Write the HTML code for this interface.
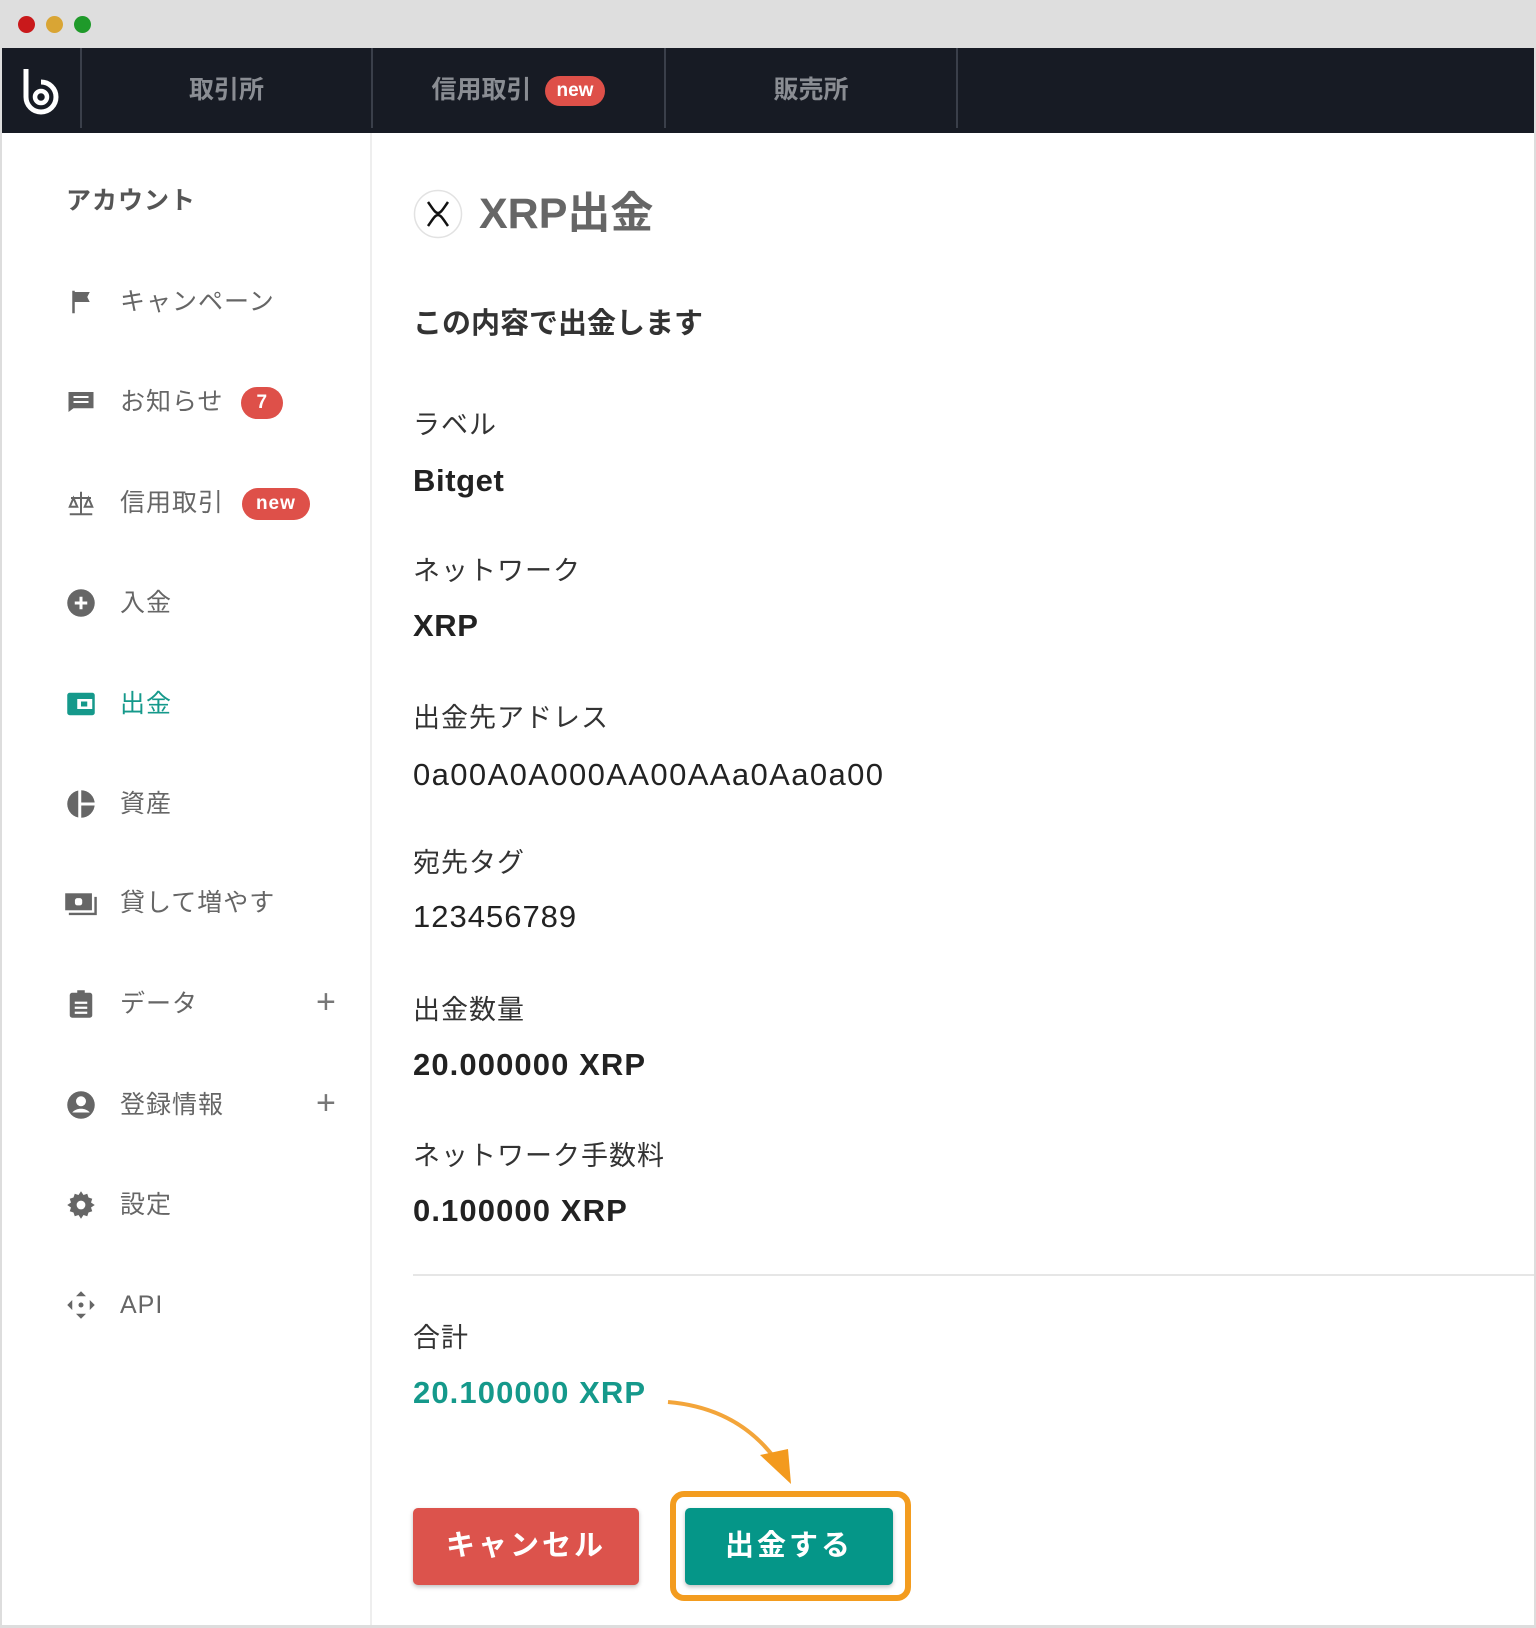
<!DOCTYPE html>
<html><head><meta charset="utf-8"><style>
*{margin:0;padding:0;box-sizing:border-box}
body{width:1536px;height:1628px;background:#fff;font-family:"Liberation Sans","Noto Sans CJK JP",sans-serif;position:relative;overflow:hidden}
.a{position:absolute;white-space:nowrap}
.chrome{left:0;top:0;width:1536px;height:48px;background:#dedede}
.dot{position:absolute;top:16px;width:17px;height:17px;border-radius:50%}
.nav{left:2px;top:48px;width:1534px;height:85px;background:#171b24}
.sep{position:absolute;top:48px;width:2px;height:80px;background:#3a3f4a}
.tab{position:absolute;top:48px;height:85px;line-height:85px;color:#8a8d93;font-size:25px;font-weight:bold;text-align:center}
.badge{display:inline-block;background:#de5049;color:#fff;border-radius:16px;font-size:19px;font-weight:bold;line-height:30px;padding:0 12px;vertical-align:middle}
.side{position:absolute;left:2px;top:133px;width:370px;height:1495px;border-right:2px solid #eee}
.si{position:absolute;left:120px;font-size:25px;color:#666;line-height:34px;margin-top:-17px;letter-spacing:1px}
.ic{position:absolute;left:66px;width:30px;height:30px;margin-top:-15px}
.plus{position:absolute;left:316px;font-size:34px;color:#777;line-height:34px;margin-top:-19px;font-weight:300}
.lbl{position:absolute;left:413px;font-size:27px;color:#333;line-height:36px;margin-top:-18px;letter-spacing:1px}
.val{position:absolute;left:413px;font-size:31px;color:#222;line-height:40px;margin-top:-20px;font-weight:bold;letter-spacing:0.6px}
</style></head><body>
<div class="a chrome"></div>
<div class="dot" style="left:18px;background:#c9191b"></div>
<div class="dot" style="left:46px;background:#d9a534"></div>
<div class="dot" style="left:74px;background:#1f9a2a"></div>
<div class="a nav"></div>
<svg class="a" style="left:20px;top:66px" width="44" height="50" viewBox="0 0 44 50"><path d="M6 3v28a15 15 0 1 0 15-15" fill="none" stroke="#fff" stroke-width="5"/><circle cx="21" cy="31" r="6" fill="none" stroke="#fff" stroke-width="4.5"/></svg>
<div class="sep" style="left:80px"></div><div class="sep" style="left:371px"></div><div class="sep" style="left:664px"></div><div class="sep" style="left:956px"></div>
<div class="tab" style="left:82px;width:289px">取引所</div>
<div class="tab" style="left:373px;width:291px">信用取引 <span class="badge" style="margin-left:6px">new</span></div>
<div class="tab" style="left:666px;width:290px">販売所</div>
<div class="a" style="right:0;top:48px;width:2px;height:1580px;background:#ddd"></div>
<div class="a" style="left:0;top:48px;width:2px;height:1580px;background:#ddd"></div>
<div class="side"></div>
<div class="a" style="left:66px;top:184px;font-size:25px;font-weight:bold;color:#555;line-height:34px;letter-spacing:1px">アカウント</div>

<svg class="ic" style="top:302px" viewBox="0 0 24 24"><path d="M5 3h2v18H5zM7 4h12l-2 4 2 4H7z" fill="#666"/></svg>
<div class="si" style="top:302px">キャンペーン</div>
<svg class="ic" style="top:402px" viewBox="0 0 24 24"><path d="M2 4h20v13H6l-4 3z" fill="#666"/><path d="M6 8h12M6 12h12" stroke="#fff" stroke-width="1.6"/></svg>
<div class="si" style="top:402px">お知らせ <span class="badge" style="padding:0 15px;margin-left:10px;line-height:32px">7</span></div>
<svg class="ic" style="top:503px" viewBox="0 0 24 24" fill="none" stroke="#666" stroke-width="1.6"><path d="M12 3v18M3 21h18M4 8h16M3 15l3-7 3 7zM15 15l3-7 3 7zM3 15h6M15 15h6"/></svg>
<div class="si" style="top:503px">信用取引 <span class="badge" style="margin-left:10px;line-height:32px;padding:0 14px">new</span></div>
<svg class="ic" style="top:603px" viewBox="0 0 24 24"><circle cx="12" cy="12" r="11" fill="#666"/><path d="M12 7v10M7 12h10" stroke="#fff" stroke-width="2.4"/></svg>
<div class="si" style="top:603px">入金</div>
<svg class="ic" style="top:704px" viewBox="0 0 24 24"><rect x="1" y="3" width="22" height="18" rx="2" fill="#15998b"/><rect x="9" y="8" width="12" height="8" fill="#fff"/><rect x="12" y="10" width="5" height="4" fill="#15998b"/></svg>
<div class="si" style="top:704px;color:#15998b">出金</div>
<svg class="ic" style="top:804px" viewBox="0 0 24 24"><circle cx="12" cy="12" r="11" fill="#666"/><path d="M11 0v24M11 12h13" stroke="#fff" stroke-width="2.4"/></svg>
<div class="si" style="top:804px">資産</div>
<svg class="ic" style="top:903px;width:34px;left:64px" viewBox="0 0 28 24"><rect x="1" y="4" width="22" height="14" fill="#666"/><rect x="9" y="8" width="6" height="6" rx="2" fill="#fff"/><path d="M4 21h22V7" fill="none" stroke="#666" stroke-width="2"/></svg>
<div class="si" style="top:903px">貸して増やす</div>
<svg class="ic" style="top:1004px" viewBox="0 0 24 24"><rect x="3" y="3" width="18" height="20" rx="2" fill="#666"/><rect x="9" y="1" width="6" height="4" fill="#666"/><path d="M7 11h10M7 15h10M7 19h10" stroke="#fff" stroke-width="1.8"/></svg>
<div class="si" style="top:1004px">データ</div><div class="plus" style="top:1004px">+</div>
<svg class="ic" style="top:1105px" viewBox="0 0 24 24"><circle cx="12" cy="12" r="11" fill="#666"/><circle cx="12" cy="9" r="4" fill="#fff"/><path d="M5 18c3-4 11-4 14 0" fill="#fff"/></svg>
<div class="si" style="top:1105px">登録情報</div><div class="plus" style="top:1105px">+</div>
<svg class="ic" style="top:1205px" viewBox="0 0 24 24"><path d="M12 1l2 3 3-1 1 3 3 1-1 3 3 2-3 2 1 3-3 1-1 3-3-1-2 3-2-3-3 1-1-3-3-1 1-3-3-2 3-2-1-3 3-1 1-3 3 1z" fill="#666"/><circle cx="12" cy="12" r="3.5" fill="#fff"/></svg>
<div class="si" style="top:1205px">設定</div>
<svg class="ic" style="top:1305px" viewBox="0 0 24 24" fill="#666"><path d="M12 1l4 4h-8zM12 23l4-4h-8zM1 12l4-4v8zM23 12l-4-4v8z"/><circle cx="12" cy="12" r="2"/></svg>
<div class="si" style="top:1305px">API</div>

<svg class="a" style="left:413px;top:189px" width="50" height="50" viewBox="0 0 50 50"><circle cx="25" cy="25" r="23.5" fill="#fff" stroke="#e2e2e2" stroke-width="1.5"/><path d="M15 13C20 20 22 24 25 24C28 24 30 20 35 13M15 37C20 30 22 26 25 26C28 26 30 30 35 37" fill="none" stroke="#111" stroke-width="2.5"/></svg>
<div class="a" style="left:479px;top:186px;font-size:43px;font-weight:bold;color:#666;line-height:56px">XRP出金</div>
<div class="a" style="left:413px;top:305px;font-size:29px;font-weight:bold;color:#333;line-height:38px">この内容で出金します</div>

<div class="lbl" style="top:425px">ラベル</div><div class="val" style="top:481px">Bitget</div>
<div class="lbl" style="top:571px">ネットワーク</div><div class="val" style="top:626px">XRP</div>
<div class="lbl" style="top:718px">出金先アドレス</div><div class="val" style="top:775px;font-weight:normal;font-size:31px;letter-spacing:1.4px">0a00A0A000AA00AAa0Aa0a00</div>
<div class="lbl" style="top:863px">宛先タグ</div><div class="val" style="top:917px;font-weight:normal;letter-spacing:1px">123456789</div>
<div class="lbl" style="top:1010px">出金数量</div><div class="val" style="top:1065px;letter-spacing:1.1px">20.000000 XRP</div>
<div class="lbl" style="top:1156px">ネットワーク手数料</div><div class="val" style="top:1211px;letter-spacing:1.1px">0.100000 XRP</div>
<div class="a" style="left:413px;top:1274px;width:1121px;height:2px;background:#e6e6e6"></div>
<div class="lbl" style="top:1338px">合計</div><div class="val" style="top:1393px;color:#15998b;letter-spacing:1.1px">20.100000 XRP</div>

<svg class="a" style="left:660px;top:1395px" width="140" height="90" viewBox="0 0 140 90"><path d="M8 7q70 6 108 58" fill="none" stroke="#f3a53a" stroke-width="4"/><path d="M100 60l28 -6 3 35z" fill="#f39a1e"/></svg>
<div class="a" style="left:413px;top:1508px;width:226px;height:77px;background:#dc534c;border-radius:5px;box-shadow:0 2px 4px rgba(0,0,0,.25);color:#fff;font-size:29px;font-weight:bold;text-align:center;line-height:77px;letter-spacing:3px">キャンセル</div>
<div class="a" style="left:670px;top:1491px;width:241px;height:110px;border:6px solid #f39c1f;border-radius:14px"></div>
<div class="a" style="left:685px;top:1508px;width:208px;height:77px;background:#059688;border-radius:5px;box-shadow:0 2px 4px rgba(0,0,0,.25);color:#fff;font-size:29px;font-weight:bold;text-align:center;line-height:77px;letter-spacing:3px">出金する</div>
<div class="a" style="left:0;top:1625px;width:1536px;height:3px;background:#ddd"></div>
</body></html>
